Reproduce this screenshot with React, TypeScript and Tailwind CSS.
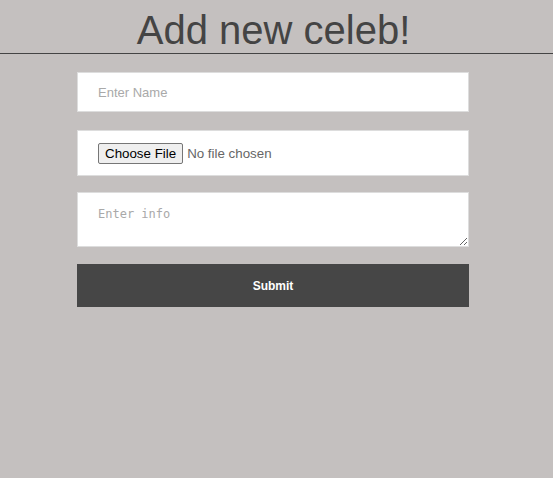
import React from 'react';

const App: React.FC = () => {
  return (
    <div className="min-h-[478px] bg-[#c4c0bf] font-['Liberation_Sans',Arial,sans-serif]">
      {/* Header */}
      <h1 className="pt-[7px] pr-[6px] border-b border-[#444] text-center text-[40px] leading-[46px] text-[#444]">
        Add new celeb!
      </h1>

      <form className="ml-[77px] w-[392px] pt-[18px] flex flex-col">
        <input
          type="text"
          placeholder="Enter Name"
          className="h-[40px] bg-white border border-[#ddd] px-[20px] text-[13px] text-[#333] placeholder:text-[#a9a9a9] outline-none"
        />
        <div className="mt-[18px] h-[46px] bg-white border border-[#ddd] px-[20px] flex items-center">
          <input
            type="file"
            className="text-[13.33px] text-[#666] file:mr-[4px] file:h-[21px] file:px-[6px] file:border file:border-[#767676] file:rounded-[2px] file:bg-[#efefef] file:text-black"
          />
        </div>
        <textarea
          placeholder="Enter info"
          className="mt-[16px] h-[55px] bg-white border border-[#ddd] px-[20px] pt-[14px] text-[12px] leading-[15px] font-['DejaVu_Sans_Mono',monospace] placeholder:text-[#a9a9a9] outline-none"
        />
        <button
          type="button"
          className="mt-[17px] h-[43px] bg-[#464646] text-white text-[12px] font-bold"
        >
          Submit
        </button>
      </form>
    </div>
  );
};

export default App;
